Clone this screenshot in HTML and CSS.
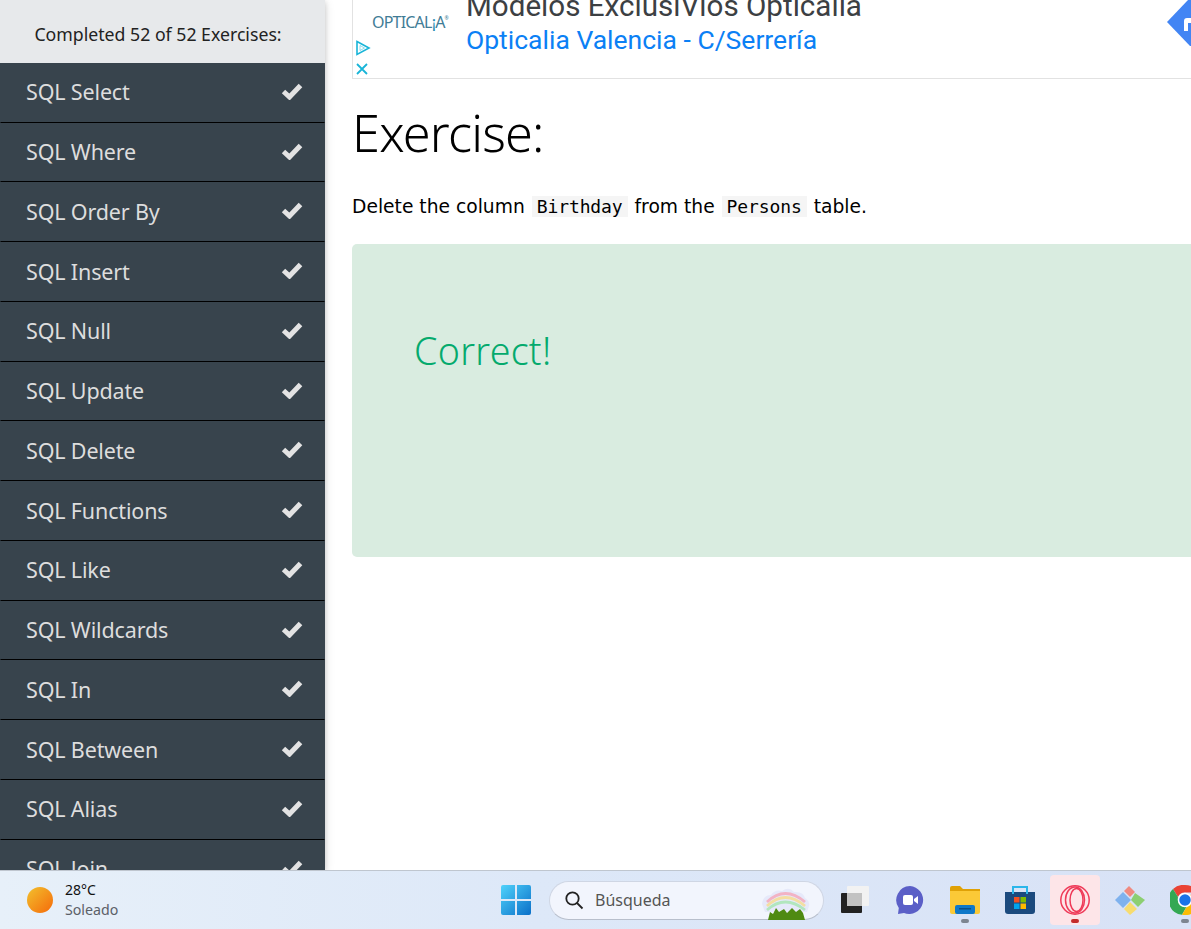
FILE: index.html
```html
<!DOCTYPE html>
<html lang="en">
<head>
<meta charset="utf-8">
<title>Exercise</title>
<link rel="stylesheet" href="styles.css">
</head>
<body>
<div class="screen">
  <div class="page">
    <aside class="sidebar">
      <div class="progress">Completed 52 of 52 Exercises:</div>
      <ul class="topics">
        <li class="topic"><span>SQL Select</span><svg class="check" viewBox="0 0 22 18"><path d="M2.500 9.500 8.500 15 19.500 3.500"/></svg></li>
        <li class="topic"><span>SQL Where</span><svg class="check" viewBox="0 0 22 18"><path d="M2.500 9.500 8.500 15 19.500 3.500"/></svg></li>
        <li class="topic"><span>SQL Order By</span><svg class="check" viewBox="0 0 22 18"><path d="M2.500 9.500 8.500 15 19.500 3.500"/></svg></li>
        <li class="topic"><span>SQL Insert</span><svg class="check" viewBox="0 0 22 18"><path d="M2.500 9.500 8.500 15 19.500 3.500"/></svg></li>
        <li class="topic"><span>SQL Null</span><svg class="check" viewBox="0 0 22 18"><path d="M2.500 9.500 8.500 15 19.500 3.500"/></svg></li>
        <li class="topic"><span>SQL Update</span><svg class="check" viewBox="0 0 22 18"><path d="M2.500 9.500 8.500 15 19.500 3.500"/></svg></li>
        <li class="topic"><span>SQL Delete</span><svg class="check" viewBox="0 0 22 18"><path d="M2.500 9.500 8.500 15 19.500 3.500"/></svg></li>
        <li class="topic"><span>SQL Functions</span><svg class="check" viewBox="0 0 22 18"><path d="M2.500 9.500 8.500 15 19.500 3.500"/></svg></li>
        <li class="topic"><span>SQL Like</span><svg class="check" viewBox="0 0 22 18"><path d="M2.500 9.500 8.500 15 19.500 3.500"/></svg></li>
        <li class="topic"><span>SQL Wildcards</span><svg class="check" viewBox="0 0 22 18"><path d="M2.500 9.500 8.500 15 19.500 3.500"/></svg></li>
        <li class="topic"><span>SQL In</span><svg class="check" viewBox="0 0 22 18"><path d="M2.500 9.500 8.500 15 19.500 3.500"/></svg></li>
        <li class="topic"><span>SQL Between</span><svg class="check" viewBox="0 0 22 18"><path d="M2.500 9.500 8.500 15 19.500 3.500"/></svg></li>
        <li class="topic"><span>SQL Alias</span><svg class="check" viewBox="0 0 22 18"><path d="M2.500 9.500 8.500 15 19.500 3.500"/></svg></li>
        <li class="topic"><span>SQL Join</span><svg class="check" viewBox="0 0 22 18"><path d="M2.500 9.500 8.500 15 19.500 3.500"/></svg></li>
      </ul>
    </aside>
    <main class="content">
      <div class="ad">
        <div class="ad-side">
          <div class="ad-logo">OPTICAL<span class="ad-logo-i">¡</span>A<span class="ad-logo-r">®</span></div>
          <div class="ad-marks">
            <svg class="ad-play" viewBox="0 0 16 16"><path d="M2 1.500 14 8 2 14.500Z"/><path class="ad-play-inner" d="M5 5.500 9.500 8 5 10.500Z"/></svg>
            <svg class="ad-close" viewBox="0 0 14 14"><path d="M2 2 12 12M12 2 2 12"/></svg>
          </div>
        </div>
        <div class="ad-copy">
          <div class="ad-title">Modelos ExclusiVlos Opticalia</div>
          <div class="ad-link">Opticalia Valencia - C/Serrería</div>
        </div>
        <div class="ad-cta"><svg viewBox="0 0 24 46"><path d="M21 0 0 22 24 47V0Z" fill="#4285f4"/><path d="M17 31V21Q17 18 20 18H24V23H21V31Z" fill="#fff"/></svg></div>
      </div>
      <h1 class="title">Exercise:</h1>
      <p class="task">Delete the column <code class="code">Birthday</code> from the <code class="code">Persons</code> table.</p>
      <div class="result"><div class="result-text">Correct!</div></div>
    </main>
  </div>
  <footer class="taskbar">
    <div class="weather">
      <div class="sun"></div>
      <div class="weather-text">
        <div class="temp">28°C</div>
        <div class="cond">Soleado</div>
      </div>
    </div>
    <div class="apps">
      <svg class="app win" viewBox="0 0 30 30"><defs><linearGradient id="w" x1="0" y1="0" x2="1" y2="1"><stop offset="0" stop-color="#4fd2fb"/><stop offset="1" stop-color="#0a6fc8"/></linearGradient></defs><path fill="url(#w)" d="M0 2Q0 0 2 0H14V14H0ZM16 0H28Q30 0 30 2V14H16ZM0 16H14V30H2Q0 30 0 28ZM16 16H30V28Q30 30 28 30H16Z"/></svg>
      <div class="search">
        <svg class="search-icon" viewBox="0 0 20 20"><circle cx="8.500" cy="8.500" r="6.200"/><path d="M13 13 18.500 18.500"/></svg>
        <span class="search-text">Búsqueda</span>
        <svg class="search-art" viewBox="0 0 50 34"><path fill="#e6e9fa" d="M1 18Q2 9 10 9 14 3 21 5 28 0 33 6 42 5 44 12 49 15 48 20L46 26H4Z"/><g fill="none" stroke-width="2.800" opacity=".8"><path stroke="#f5a6b8" d="M6 16Q24 -1 44 16"/><path stroke="#f8dc8c" d="M6 20Q24 3 44 20"/><path stroke="#a6e6b0" d="M6 24Q24 8 44 24"/></g><path fill="#4f8a12" d="M7 34 9 26 12 28 15 22 18 26 23 23 26 27 31 22 35 26 39 23 42 27 44 34Z"/></svg>
      </div>
      <div class="app-slot">
        <svg class="app" viewBox="0 0 30 30"><rect x="1" y="8" width="21" height="20" rx="1" fill="#222"/><rect x="7" y="1" width="22" height="20" rx="1" fill="#f2f2f2"/><rect x="7" y="8" width="15" height="13" fill="#c2c2c2"/></svg>
      </div>
      <div class="app-slot">
        <svg class="app" viewBox="0 0 30 30"><path fill="#5b5fc7" d="M15 1A14 14 0 1 1 9 28L3 29 3.800 23A14 14 0 0 1 15 1Z"/><rect x="8" y="10" width="10" height="10" rx="2" fill="#fff"/><path fill="#fff" d="M19 14 23 11V19L19 16Z"/></svg>
      </div>
      <div class="app-slot running">
        <svg class="app" viewBox="0 0 30 30"><path fill="#e0a106" d="M0 3Q0 1 2 1H10L13 4H30V11H0Z"/><path fill="#fbc937" d="M0 6H30V27Q30 29 28 29H2Q0 29 0 27Z"/><rect x="5" y="20" width="20" height="9" rx="2" fill="#0f78c9"/><rect x="9" y="23" width="12" height="1.500" fill="#0a4f8a"/></svg>
      </div>
      <div class="app-slot">
        <svg class="app" viewBox="0 0 30 30"><path fill="#1b4a7e" d="M0 7H30V26Q30 29 27 29H3Q0 29 0 26Z"/><path fill="none" stroke="#2bb6ea" stroke-width="2" d="M8 9V2H22V9"/><rect x="9" y="12" width="5.500" height="5.500" fill="#f25022"/><rect x="15.500" y="12" width="5.500" height="5.500" fill="#7fba00"/><rect x="9" y="18.500" width="5.500" height="5.500" fill="#00a4ef"/><rect x="15.500" y="18.500" width="5.500" height="5.500" fill="#ffb900"/></svg>
      </div>
      <div class="app-slot active">
        <svg class="app" viewBox="0 0 30 30"><g fill="none" stroke="#ef3a58" stroke-width="1.500"><circle cx="15" cy="15" r="14.200"/><ellipse cx="15" cy="15" rx="9.500" ry="13"/><ellipse cx="16.500" cy="15" rx="6.500" ry="11.500"/></g></svg>
      </div>
      <div class="app-slot">
        <svg class="app" viewBox="0 0 30 30"><path fill="#7fb2ee" d="M0 15 8 7 16 15 8 23Z"/><path fill="#f08a80" d="M9 6 14 1 20 7 15 12Z"/><path fill="#8ccf72" d="M20 8 30 15 23 22 16 15Z"/><path fill="#f7dc6f" d="M9 24 15 17 22 24 15 30Z"/></svg>
      </div>
      <div class="app-slot running">
        <svg class="app" viewBox="0 0 30 30"><path fill="#ea4335" d="M15 0A15 15 0 0 1 28 7.500H15A7.500 7.500 0 0 0 8 12L3 4A15 15 0 0 1 15 0Z"/><path fill="#34a853" d="M3 4A15 15 0 0 0 12 29.700L17 21A7.500 7.500 0 0 1 8 12Z"/><path fill="#fbbc05" d="M28 7.500A15 15 0 0 1 12 29.700L19 18A7.500 7.500 0 0 0 20 10Z"/><circle cx="15" cy="15" r="6.500" fill="#1a73e8" stroke="#fff" stroke-width="1.500"/></svg>
      </div>
    </div>
  </footer>
</div>
</body>
</html>
```
FILE: styles.css
```css
* { box-sizing: border-box; }
html, body { margin: 0; height: 100%; overflow: hidden; background: #fff; }
.screen { display: flex; flex-direction: column; height: 929px; width: 1191px; overflow: hidden; font-family: "Noto Sans", sans-serif; }
.page { display: flex; height: 870px; flex: none; overflow: hidden; }

.sidebar { width: 325px; flex: none; background: #38444d; box-shadow: 0 2px 5px rgba(0,0,0,.16), 0 2px 10px rgba(0,0,0,.12); overflow: hidden; position: relative; z-index: 1; }
.progress { height: 62.9px; background: #e7e9eb; color: #222; font-size: 17.7px; display: flex; align-items: center; justify-content: center; padding: 6px 9px 0 0; }
.topics { list-style: none; margin: 0; padding: 0; }
.topic { height: 59.75px; display: flex; align-items: center; justify-content: space-between; padding: 0 21px 1px 25px; color: #ddd; font-size: 21.5px; letter-spacing: -.15px; position: relative; border-bottom: 1px solid #000; border-left: 1px solid #38444d; border-right: 1px solid #38444d; }
.check { width: 22px; height: 18px; margin-bottom: 2px; fill: none; stroke: #e3e3e3; stroke-width: 5; }

.content { flex: 1; min-width: 0; padding-left: 27px; overflow: hidden; }
.ad { height: 79px; display: flex; border-left: 1px solid #e2e2e2; border-bottom: 1px solid #e2e2e2; width: 900px; position: relative; overflow: hidden; }
.ad-side { width: 113px; flex: none; position: relative; }
.ad-logo { font-size: 16px; color: #417c96; letter-spacing: -.8px; padding: 11px 0 0 19px; white-space: nowrap; }
.ad-logo-i { color: #1f8cb3; }
.ad-logo-r { font-size: 5px; vertical-align: 8px; letter-spacing: 0; }
.ad-marks { position: absolute; left: 2px; top: 40px; display: flex; flex-direction: column; gap: 6px; }
.ad-play { width: 16px; height: 16px; fill: none; stroke: #19b5d8; stroke-width: 1.6; }
.ad-play-inner { stroke-width: .8; opacity: .6; }
.ad-close { width: 14px; height: 14px; fill: none; stroke: #19b5d8; stroke-width: 1.8; }
.ad-copy { flex: none; width: 600px; margin-top: -12px; }
.ad-title { font-family: Roboto, sans-serif; font-size: 29.6px; line-height: 36px; color: #3c4043; white-space: nowrap; }
.ad-link { font-family: Roboto, sans-serif; font-size: 26.5px; line-height: 32px; color: #0b80f5; white-space: nowrap; }
.ad-cta { position: absolute; left: 814px; top: 0; width: 24px; height: 46px; }
.ad-cta svg { display: block; width: 24px; height: 46px; }

.title { margin: 21px 0 0; font-size: 50.5px; line-height: 66px; font-weight: 350; color: #000; letter-spacing: -.8px; }
.task { margin: 27px 0 0; font-family: "DejaVu Sans", sans-serif; font-size: 18.7px; line-height: 27px; color: #000; }
.code { font-family: "DejaVu Sans Mono", monospace; font-size: 18px; background: #f5f5f5; padding: 0 5px; margin: 0 1px; letter-spacing: -.1px; }
.result { margin-top: 24px; width: 900px; height: 313px; background: #d9ece0; border-radius: 5px; padding: 81px 0 0 62px; }
.result-text { color: #04aa6d; font-size: 37.6px; line-height: 52px; font-weight: 350; letter-spacing: .3px; }

.taskbar { height: 59px; flex: none; background: linear-gradient(90deg, #e7f0f9 0%, #dde8f8 45%, #d8e2f6 100%); border-top: 1px solid #bfc6cf; display: flex; position: relative; z-index: 2; }
.weather { display: flex; align-items: center; gap: 12px; padding-left: 27px; width: 501px; flex: none; }
.sun { width: 26px; height: 26px; border-radius: 50%; background: linear-gradient(135deg, #f2c12e, #f56a0a); }
.temp { font-size: 14px; line-height: 20px; color: #111; }
.cond { font-size: 14.2px; line-height: 20px; color: #5b6068; }
.apps { display: flex; align-items: center; }
.app { width: 30px; height: 30px; display: block; }
.win { margin-right: 18px; }
.search { width: 275px; height: 39px; border-radius: 20px; background: #f2f5fd; border: 1px solid #cfd6e4; border-bottom-color: #b8bfcc; display: flex; align-items: center; padding-left: 14px; position: relative; margin-right: 6px; }
.search-icon { width: 20px; height: 20px; fill: none; stroke: #222; stroke-width: 1.8; }
.search-text { margin-left: 11px; font-size: 16px; color: #555; }
.search-art { position: absolute; left: 211px; top: 4px; width: 50px; height: 34px; }
.app-slot { width: 50px; height: 50px; display: flex; align-items: center; justify-content: center; position: relative; margin-right: 5px; }
.app-slot.running::after, .app-slot.active::after { content: ""; position: absolute; bottom: 2px; left: 50%; width: 8px; height: 4px; margin-left: -4px; border-radius: 2px; background: #7d8590; }
.app-slot.active { background: #fde5e8; border-radius: 4px; }
.app-slot.active::after { background: #c42a2a; }
```
